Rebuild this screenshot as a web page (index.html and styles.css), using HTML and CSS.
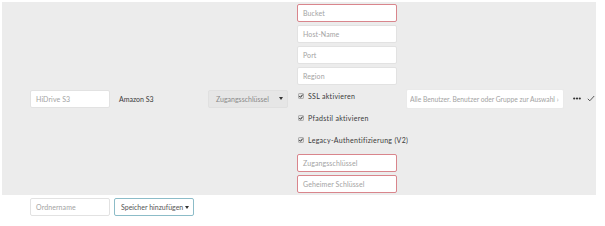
FILE: index.html
```html
<!DOCTYPE html>
<html>
<head>
<meta charset="utf-8">
<link rel="stylesheet" href="styles.css">
</head>
<body>
<div class="page">
  <div class="row">
    <div class="col"><div class="input">HiDrive S3</div></div>
    <div class="col text">Amazon S3</div>
    <div class="col"><div class="select"><span>Zugangsschlüssel</span><span class="caret"></span></div></div>
    <div class="col config">
      <div class="input err">Bucket</div>
      <div class="input">Host-Name</div>
      <div class="input">Port</div>
      <div class="input">Region</div>
      <div class="checks">
        <div class="check"><svg width="6" height="6" viewBox="0 0 6 6"><rect x="0.5" y="0.5" width="5" height="5" rx="0.8" fill="#e0e0e0" stroke="#888" stroke-width="0.6"/><path d="M1.3 3.1 L2.5 4.3 L4.7 1.6" fill="none" stroke="#222" stroke-width="1"/></svg><span>SSL aktivieren</span></div>
        <div class="check"><svg width="6" height="6" viewBox="0 0 6 6"><rect x="0.5" y="0.5" width="5" height="5" rx="0.8" fill="#e0e0e0" stroke="#888" stroke-width="0.6"/><path d="M1.3 3.1 L2.5 4.3 L4.7 1.6" fill="none" stroke="#222" stroke-width="1"/></svg><span>Pfadstil aktivieren</span></div>
        <div class="check"><svg width="6" height="6" viewBox="0 0 6 6"><rect x="0.5" y="0.5" width="5" height="5" rx="0.8" fill="#e0e0e0" stroke="#888" stroke-width="0.6"/><path d="M1.3 3.1 L2.5 4.3 L4.7 1.6" fill="none" stroke="#222" stroke-width="1"/></svg><span>Legacy-Authentifizierung (V2)</span></div>
      </div>
      <div class="input err">Zugangsschlüssel</div>
      <div class="input err last">Geheimer Schlüssel</div>
    </div>
    <div class="col users"><div class="input wide"><span class="ph">Alle Benutzer. Benutzer oder Gruppe zur Auswahl ›</span></div></div>
    <div class="dots"><svg width="8" height="3" viewBox="0 0 8 3"><circle cx="1.2" cy="1.5" r="1.1" fill="#333"/><circle cx="4" cy="1.5" r="1.1" fill="#333"/><circle cx="6.8" cy="1.5" r="1.1" fill="#333"/></svg></div>
    <div class="ok"><svg width="8" height="7" viewBox="0 0 8 7"><path d="M0.8 3.8 L2.8 5.8 L7.2 1" fill="none" stroke="#444" stroke-width="0.9"/></svg></div>
  </div>
  <div class="bottom">
    <div class="input">Ordnername</div>
    <div class="button"><span>Speicher hinzufügen</span><span class="caret"></span></div>
  </div>
</div>
</body>
</html>
```
FILE: styles.css
```css
* { box-sizing: border-box; }
html, body { margin: 0; padding: 0; background: #fff; }
body { font-family: Lato, "Open Sans", sans-serif; font-size: 7px; color: #333; }
.page { padding: 2px 0 0 2px; width: 596px; }
.row {
  background: #ececec;
  height: 193px;
  display: flex;
  align-items: center;
  gap: 9px;
  padding-left: 28px;
}
.col { width: 80px; flex: none; }
.text { color: #3a3a3a; }
.input {
  height: 18px;
  background: #fff;
  border: 1px solid #e2e2e2;
  border-radius: 2px;
  color: #a3a3a3;
  padding: 0 5px;
  display: flex;
  align-items: center;
  white-space: nowrap;
  overflow: hidden;
  letter-spacing: 0.1px;
}
.input.err { border-color: #d9858c; }
.select {
  height: 18px;
  background: #e6e6e6;
  border: 1px solid #e0e0e0;
  border-radius: 2px;
  color: #8a8a8a;
  padding: 0 4px 0 7px;
  display: flex;
  align-items: center;
  justify-content: space-between;
}
.caret {
  width: 0; height: 0;
  border-left: 2.5px solid transparent;
  border-right: 2.5px solid transparent;
  border-top: 3px solid #333;
}
.config { width: 100px; display: flex; flex-direction: column; }
.config .input { margin-bottom: 3px; }
.config .input.last { margin-bottom: 0; }
.checks { display: flex; flex-direction: column; margin-top: -3px; margin-bottom: 3px; }
.check { height: 22px; display: flex; align-items: center; gap: 4px; padding-left: 1px; color: #3a3a3a; white-space: nowrap; letter-spacing: 0.3px; }
.check svg { flex: none; }
.users { width: 158px; }
.input.wide { height: 20px; border-color: #eaeaea; padding: 0 3px; letter-spacing: 0; font-size: 6.7px; }
.ph { display: block; overflow: hidden; text-overflow: ellipsis; white-space: nowrap; min-width: 0; }
.dots { width: 8px; flex: none; display: flex; align-items: center; }
.ok { width: 9px; flex: none; display: flex; align-items: center; margin-left: -3px; }
.bottom { display: flex; gap: 4px; padding: 3px 0 0 28px; }
.bottom .input { width: 80px; }
.button {
  width: 80px; height: 18px;
  border: 1px solid #8cbcc8;
  border-radius: 2px;
  background: #fff;
  color: #555;
  display: flex; align-items: center; justify-content: space-between;
  padding: 0 4px 0 6px;
}
```
